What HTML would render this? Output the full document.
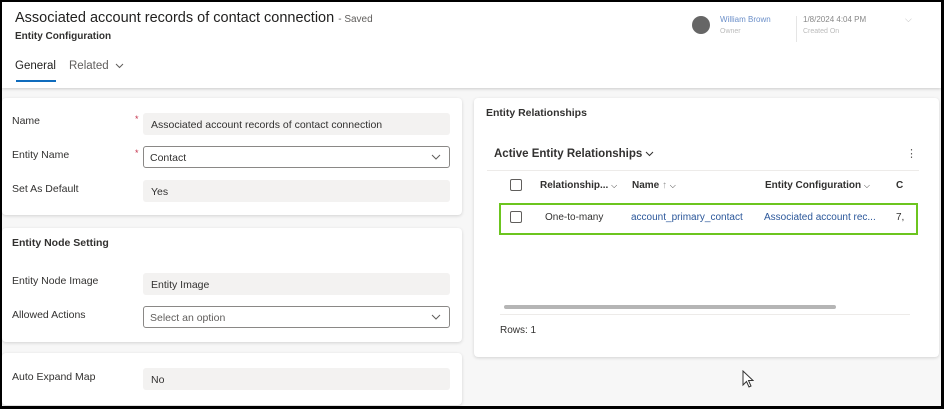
<!DOCTYPE html>
<html><head><style>
*{margin:0;padding:0;box-sizing:border-box}
body{width:944px;height:409px;overflow:hidden;background:#000;font-family:"Segoe UI","Liberation Sans",sans-serif;position:relative}
.wrap{position:absolute;left:2px;top:2px;width:939px;height:404px;background:#f7f7f7;overflow:hidden}
.a{position:absolute;white-space:nowrap}
.hdr{position:absolute;left:0;top:0;width:939px;height:86px;background:#fff;box-shadow:0 1px 3px rgba(0,0,0,.18)}
.card{position:absolute;background:#fff;border-radius:4px;box-shadow:0 1px 3px rgba(0,0,0,.15)}
.lbl{font-size:10.5px;color:#323130}
.in{position:absolute;left:141px;width:307px;height:22px;background:#f3f2f1;border-radius:3px;font-size:10.5px;color:#323130;padding:6px 8px 0}
.sel{background:#fff;border:1px solid #8a8886;padding:5px 6px 0}
.chev{position:absolute;right:8px;top:7px}
.star{position:absolute;left:133px;color:#c4314b;font-size:9px}
.lnk{color:#2b579a}
.h{font-weight:600}
</style></head><body><div class="wrap">
<div class="hdr">
<div class="a" style="left:13px;top:8px;font-size:14.5px;color:#201f1e">Associated account records of contact connection <span style="font-size:10px;color:#605e5c">- Saved</span></div>
<div class="a" style="left:13px;top:29px;font-size:10px;font-weight:600;color:#323130">Entity Configuration</div>
<div class="a" style="left:13px;top:58px;font-size:11.5px;color:#201f1e">General</div>
<div class="a" style="left:14px;top:78px;width:40px;height:2px;background:#0f6cbd"></div>
<div class="a" style="left:67px;top:58px;font-size:11.5px;color:#605e5c">Related <svg width="9" height="6" viewBox="0 0 9 6" style="margin-left:3px"><path d="M1 1l3.5 3.5L8 1" fill="none" stroke="#605e5c"/></svg></div>
<div class="a" style="left:690px;top:14px;width:18px;height:18px;border-radius:50%;background:#666"></div>
<div class="a" style="left:718px;top:13px;font-size:8px;color:#6b8fc9">William Brown</div>
<div class="a" style="left:718px;top:26px;font-size:7px;color:#bbb">Owner</div>
<div class="a" style="left:794px;top:14px;width:1px;height:26px;background:#e5e5e5"></div>
<div class="a" style="left:801px;top:13px;font-size:8px;color:#888">1/8/2024 4:04 PM</div>
<div class="a" style="left:801px;top:26px;font-size:7px;color:#bbb">Created On</div>
<div class="a" style="left:903px;top:12px;font-size:9px;color:#bbb">⌵</div>
</div>
<div class="card" style="left:0;top:96px;width:460px;height:117px">
<div class="a lbl" style="left:10px;top:17px">Name</div><span class="a star" style="top:16px">*</span>
<div class="in" style="top:15px">Associated account records of contact connection</div>
<div class="a lbl" style="left:10px;top:51px">Entity Name</div><span class="a star" style="top:50px">*</span>
<div class="in sel" style="top:48px">Contact<svg class="chev" width="10" height="6" viewBox="0 0 10 6"><path d="M1 1l4 4 4-4" fill="none" stroke="#605e5c"/></svg></div>
<div class="a lbl" style="left:10px;top:85px">Set As Default</div>
<div class="in" style="top:82px">Yes</div>
</div>
<div class="card" style="left:0;top:226px;width:460px;height:114px">
<div class="a lbl h" style="left:10px;top:9px">Entity Node Setting</div>
<div class="a lbl" style="left:10px;top:47px">Entity Node Image</div>
<div class="in" style="top:45px">Entity Image</div>
<div class="a lbl" style="left:10px;top:81px">Allowed Actions</div>
<div class="in sel" style="top:78px;color:#605e5c">Select an option<svg class="chev" width="10" height="6" viewBox="0 0 10 6"><path d="M1 1l4 4 4-4" fill="none" stroke="#605e5c"/></svg></div>
</div>
<div class="card" style="left:0;top:351px;width:460px;height:52px">
<div class="a lbl" style="left:10px;top:18px">Auto Expand Map</div>
<div class="in" style="top:15px">No</div>
</div>
<div class="card" style="left:472px;top:96px;width:465px;height:259px">
<div class="a lbl h" style="left:12px;top:9px">Entity Relationships</div>
<div class="a" style="left:20px;top:50px;font-size:11.5px;font-weight:600;color:#323130">Active Entity Relationships <svg width="9" height="6" viewBox="0 0 9 6"><path d="M1 1l3.5 3.5L8 1" fill="none" stroke="#323130"/></svg></div>
<div class="a" style="left:432px;top:49px;font-size:11px;color:#605e5c">⋮</div>
<div class="a" style="left:13px;top:72px;width:432px;height:1px;background:#edebe9"></div>
<div class="a" style="left:36px;top:81px;width:12px;height:12px;border:1px solid #605e5c;border-radius:2px"></div>
<div class="a lbl h" style="left:66px;top:82px;font-size:10px">Relationship... <span style="font-size:8px;font-weight:400">⌵</span></div>
<div class="a lbl h" style="left:158px;top:82px;font-size:10px">Name <span style="font-weight:400;color:#999">↑</span> <span style="font-size:8px;font-weight:400">⌵</span></div>
<div class="a lbl h" style="left:291px;top:82px;font-size:10px">Entity Configuration <span style="font-size:8px;font-weight:400">⌵</span></div>
<div class="a lbl h" style="left:422px;top:82px;font-size:10px">C</div>
<div class="a" style="left:25px;top:105px;width:419px;height:32px;border:2px solid #6cc51f"></div>
<div class="a" style="left:36px;top:113px;width:12px;height:12px;border:1px solid #605e5c;border-radius:2px"></div>
<div class="a lbl" style="left:71px;top:114px;font-size:10px">One-to-many</div>
<div class="a lbl lnk" style="left:157px;top:114px;font-size:10px">account_primary_contact</div>
<div class="a lbl lnk" style="left:290px;top:114px;font-size:10px">Associated account rec...</div>
<div class="a lbl" style="left:422px;top:114px;font-size:10px">7,</div>
<div class="a" style="left:30px;top:207px;width:332px;height:4px;border-radius:2px;background:#b5b5b5"></div>
<div class="a" style="left:26px;top:216px;width:410px;height:1px;background:#edebe9"></div>
<div class="a" style="left:26px;top:227px;font-size:10px;color:#323130">Rows: 1</div>
</div>
<svg class="a" style="left:740px;top:368px" width="12" height="18" viewBox="0 0 12 18"><path d="M1 1v14l3.5-3.5 2.5 5.5 2-1-2.5-5.5H11z" fill="#fff" stroke="#333" stroke-width="1"/></svg>
</div></body></html>
